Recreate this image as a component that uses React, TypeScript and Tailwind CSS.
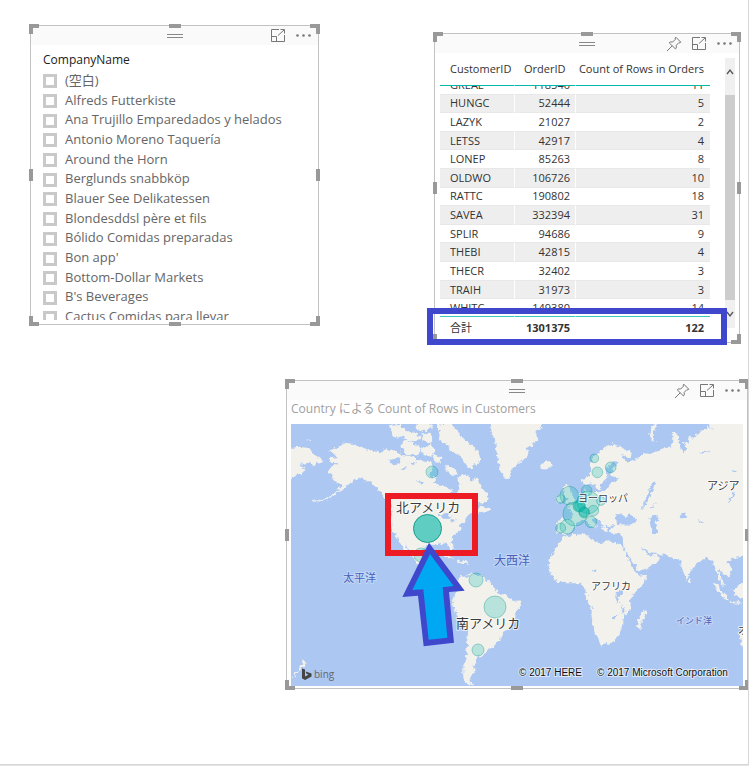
import { useLayoutEffect, useRef, type ReactNode } from "react";

const companies = [
  "(空白)",
  "Alfreds Futterkiste",
  "Ana Trujillo Emparedados y helados",
  "Antonio Moreno Taquería",
  "Around the Horn",
  "Berglunds snabbköp",
  "Blauer See Delikatessen",
  "Blondesddsl père et fils",
  "Bólido Comidas preparadas",
  "Bon app'",
  "Bottom-Dollar Markets",
  "B's Beverages",
  "Cactus Comidas para llevar",
];

const orders: [string, number, number][] = [
  ["GREAL", 118540, 11],
  ["HUNGC", 52444, 5],
  ["LAZYK", 21027, 2],
  ["LETSS", 42917, 4],
  ["LONEP", 85263, 8],
  ["OLDWO", 106726, 10],
  ["RATTC", 190802, 18],
  ["SAVEA", 332394, 31],
  ["SPLIR", 94686, 9],
  ["THEBI", 42815, 4],
  ["THECR", 32402, 3],
  ["TRAIH", 31973, 3],
  ["WHITC", 149380, 14],
];

function PinIcon() {
  return (
    <svg viewBox="0 0 16 16" className="h-4 w-4" fill="none" stroke="#777" strokeWidth="1">
      <path d="M9.8 1.2 14.8 6.2 13.8 6.9 12.9 6.6 10.2 9.4 10.3 11.9 9.4 12.9 3.2 6.8 4.2 5.9 6.7 6 9.5 3.1 9.1 2.1Z M6.2 9.8 1 15" />
    </svg>
  );
}

function FocusIcon() {
  return (
    <svg viewBox="0 0 15 13" className="h-[13px] w-[15px]" fill="none" stroke="#777" strokeWidth="1">
      <path d="M8 .5H.5v12h13V6M.5 7.5h5v5M7 6.500 13 1M9.500 .5h4v4" />
    </svg>
  );
}

function DotsIcon() {
  return (
    <svg viewBox="0 0 15 3" className="h-[3px] w-[15px]" fill="#777">
      <circle cx="1.5" cy="1.5" r="1.3" />
      <circle cx="7.5" cy="1.5" r="1.3" />
      <circle cx="13.5" cy="1.5" r="1.3" />
    </svg>
  );
}

function Handles() {
  return (
    <div aria-hidden="true" className="pointer-events-none absolute -inset-[2px]">
      <i className="absolute top-0 left-0 h-[10px] w-[10px] border-t-4 border-l-4 border-[#999]" />
      <i className="absolute top-0 right-0 h-[10px] w-[10px] border-t-4 border-r-4 border-[#999]" />
      <i className="absolute bottom-0 left-0 h-[10px] w-[10px] border-b-4 border-l-4 border-[#999]" />
      <i className="absolute right-0 bottom-0 h-[10px] w-[10px] border-r-4 border-b-4 border-[#999]" />
      <i className="absolute inset-x-0 top-0 mx-auto h-1 w-3 bg-[#999]" />
      <i className="absolute inset-x-0 bottom-0 mx-auto h-1 w-3 bg-[#999]" />
      <i className="absolute inset-y-0 left-0 my-auto h-3 w-1 bg-[#999]" />
      <i className="absolute inset-y-0 right-0 my-auto h-3 w-1 bg-[#999]" />
    </div>
  );
}

function Visual({ label, pin, className, children }: { label: string; pin?: boolean; className: string; children: ReactNode }) {
  return (
    <section aria-label={label} className={`relative flex flex-col border border-[#c2c2c2] bg-white ${className}`}>
      <header className="grid h-[19px] shrink-0 grid-cols-[1fr_16px_1fr] items-center bg-[#fafafa]">
        <span />
        <span className="h-1 w-4 border-y border-[#888]" />
        <div className="flex items-center justify-end gap-[10px] pr-[7px]">
          {pin && (
            <button aria-label="Pin visual">
              <PinIcon />
            </button>
          )}
          <button aria-label="Focus mode">
            <FocusIcon />
          </button>
          <button aria-label="More options">
            <DotsIcon />
          </button>
        </div>
      </header>
      {children}
      <Handles />
    </section>
  );
}

function Slicer() {
  return (
    <Visual label="CompanyName" className="h-[300px] w-[289px]">
      <div className="flex min-h-0 flex-1 flex-col px-3 pt-[5px] pb-1">
        <h2 className="h-5 text-[12px] leading-5 text-[#222]">CompanyName</h2>
        <div className="min-h-0 flex-1 overflow-hidden">
          <ul className="flex h-[256px] flex-col">
            {companies.map((name) => (
              <li key={name} className="flex flex-1 items-center">
                <label className="flex items-center gap-2 text-[13px] leading-[18px] whitespace-nowrap text-[#666]">
                  <input
                    type="checkbox"
                    className="mt-[3px] h-[14px] w-[14px] appearance-none border-[3px] border-[#c9c9c9] bg-white"
                  />
                  {name}
                </label>
              </li>
            ))}
          </ul>
        </div>
      </div>
    </Visual>
  );
}

function OrdersTable() {
  const scroller = useRef<HTMLDivElement>(null);
  useLayoutEffect(() => {
    if (scroller.current) scroller.current.scrollTop = 10;
  }, []);
  return (
    <Visual label="Orders by customer" pin className="mt-2 h-[310px] w-[306px]">
      <div className="flex min-h-0 flex-1 gap-[15px] pt-[5px] pr-1 pb-1 pl-[5px]">
        <div ref={scroller} className="h-[280px] flex-1 overflow-hidden">
          <table className="h-[292px] w-full table-fixed border-separate border-spacing-0 text-[11px] leading-4 text-[#333]">
            <colgroup>
              <col className="w-[75px]" />
              <col className="w-[61px]" />
              <col />
            </colgroup>
            <thead className="sticky top-0 z-10 bg-white">
              <tr className="h-7">
                <th className="border-r border-b border-r-white border-b-[#01b8aa] pb-1.5 pl-[10px] text-left font-normal">CustomerID</th>
                <th className="border-r border-b border-r-white border-b-[#01b8aa] pb-1.5 pl-[9px] text-left font-normal">OrderID</th>
                <th className="border-b border-[#01b8aa] pr-1.5 pb-1.5 text-right font-normal whitespace-nowrap">Count of Rows in Orders</th>
              </tr>
            </thead>
            <tbody>
              {orders.map(([id, order, count]) => (
                <tr key={id} className="even:bg-[#eee]">
                  <td className="border-r border-b border-r-white border-b-[#e8e8e8] pl-[10px]">{id}</td>
                  <td className="border-r border-b border-r-white border-b-[#e8e8e8] pr-[5px] text-right">{order}</td>
                  <td className="border-b border-[#e8e8e8] pr-1.5 text-right">{count}</td>
                </tr>
              ))}
            </tbody>
            <tfoot className="sticky bottom-0 z-10 bg-white">
              <tr className="h-[22px]">
                <th className="border-t border-r border-t-[#3cc5ba] border-r-white pl-[10px] text-left font-normal">合計</th>
                <td className="border-t border-r border-t-[#3cc5ba] border-r-white pr-[5px] text-right font-bold">1301375</td>
                <td className="border-t border-[#3cc5ba] pr-1.5 text-right font-bold">122</td>
              </tr>
            </tfoot>
          </table>
        </div>
        <div className="flex h-[270px] w-[10px] flex-col bg-[#f0f0f0]">
          <svg viewBox="0 0 10 37" className="h-[37px] w-full" fill="none" stroke="#555" strokeWidth="1.3">
            <path d="M2 16 5 12 8 16" />
          </svg>
          <div className="flex-1 bg-[#cdcdcd]" />
          <svg viewBox="0 0 10 28" className="h-7 w-full" fill="none" stroke="#555" strokeWidth="1.3">
            <path d="M2 12 5 16 8 12" />
          </svg>
        </div>
      </div>
      <div aria-hidden="true" className="absolute -bottom-[3px] -left-2 z-20 h-[37px] w-[300px] border-[6px] border-[#3f48cc]" />
    </Visual>
  );
}

const europeBubbles = [
  [88, 227, 28],
  [62, 237, 13],
  [140, 212, 16],
  [105, 282, 36],
  [145, 247, 34],
  [183, 243, 13],
  [120, 258, 16],
  [133, 278, 16],
  [160, 272, 16],
  [153, 306, 17],
  [82, 320, 22],
  [62, 324, 15],
  [163, 115, 13],
  [172, 157, 16],
  [212, 142, 16],
];

function WorldMap() {
  return (
    <svg
      role="img"
      aria-label="Customers by country"
      viewBox="291 424 452 262"
      preserveAspectRatio="xMidYMid slice"
      className="h-[262px] w-full bg-[#abc7f2]"
    >
      <defs>
        <filter id="coast" x="0" y="0" width="100%" height="100%" colorInterpolationFilters="sRGB">
          <feTurbulence type="fractalNoise" baseFrequency="0.25" numOctaves="2" seed="4" />
          <feDisplacementMap in="SourceGraphic" scale="6" xChannelSelector="R" yChannelSelector="G" />
        </filter>
      </defs>
      <g fill="#f2f1ec" filter="url(#coast)">
        <rect x="281" y="414" width="472" height="282" fill="#abc7f2" />
        <g transform="translate(290 420) scale(.33333)">
          <path d="M-9 84 30 80 55 85 75 105 97 120 92 132 80 125 75 138 55 128 30 135 50 150 20 165-9 184ZM50 58l15 2-8 5Z" />
          <path d="M145 80 165 68 190 72 215 82 245 92 272 98 285 84 300 92 322 90 335 105 360 108 385 120 400 128 410 120 425 130 430 150 415 165 440 175 432 185 445 196 460 198 482 208 490 232 500 240 503 215 508 195 505 172 520 160 535 168 545 185 560 175 570 195 585 215 600 235 590 245 575 250 560 250 555 262 580 258 602 268 590 275 570 280 560 276 545 278 530 290 525 305 510 315 512 330 490 350 485 365 492 385 480 388 470 372 450 370 430 378 415 375 400 385 392 405 400 430 420 432 430 420 442 425 434 440 450 450 452 470 470 482 495 480 490 490 465 490 445 475 430 455 405 448 380 430 365 405 350 382 345 375 355 400 360 415 345 395 333 370 318 350 305 330 303 300 305 270 300 250 285 235 270 215 255 195 235 185 215 175 205 170 190 185 175 195 160 200 140 212 155 195 140 185 125 180 130 165 115 155 118 145 145 130 115 128 120 115 140 112 130 100 118 92Z" />
          <path d="M200 175 165 205 130 228 100 242 70 246 68 243 100 238 130 222 160 200Z" />
          <path d="M300 14 330 12 345 32 372 38 392 50 384 66 350 60 338 46 325 56 308 46ZM335 66 352 62 384 76 396 90 380 106 350 105 335 85ZM376 8h44l10 12-22 14-30-8ZM398 40l24 2 8 18-14 10-20-12ZM394 84l30-14 10 22-12 18-24-6ZM430 100l24 14-8 18-18-8Z" />
          <path d="M436 14 480 10 500 28 512 48 528 58 545 75 565 95 572 120 562 138 548 128 552 146 535 148 528 132 518 124 512 108 495 98 482 92 478 76 460 68 446 60 450 36ZM468 134l22 8 14 20-18 6-16-16Z" />
          <path d="M602-6 602 12 605 40 615 60 620 100 628 140 640 170 655 178 665 150 690 130 720 100 705 85 725 78 745 58 735 36 755 22 760-6Z" />
          <path d="M442 398 470 403 492 418 470 410ZM498 424 520 420 540 430 520 432Z" />
          <g fill="#abc7f2">
            <path d="M298 122l14-8 20 4-4 14-18 4ZM332 148l18-6-8 12ZM445 285l25-6 10 12-18 6ZM478 296l24 4-16 8ZM352 130l26-4-6 12ZM380 180l22 6-8 8Z" />
          </g>
        </g>
        <g transform="translate(410 540) scale(.33333)">
          <path d="M135 125 150 108 165 112 185 100 215 108 235 122 250 140 258 155 275 160 300 175 330 185 334 198 318 215 312 250 300 265 280 275 268 300 250 320 235 330 220 345 205 350 200 365 190 380 195 395 185 405 178 420 192 436 172 432 160 415 160 380 168 350 172 300 175 270 160 250 140 225 128 190 135 165 145 150Z" />
          <path d="M-356 412 -340 395-328 378-325 358-310 372-330 390-345 408Z" />
        </g>
        <g transform="translate(540 420) scale(.33333)">
          <path d="M0 132 8 126 22 120 36 134 22 150 6 146Z" />
          <path d="M122 184 150 165 150 130 165 105 190 85 215 72 240 80 275 98 272 115 242 105 262 125 300 115 310 100 330 102 370 85 395 82 398 40 412 38 420 80 430 100 440 88 428 66 445 68 450 46 462 60 468 42 492 28 520 6 640 6 640 405 580 415 562 425 575 445 565 470 550 460 535 445 542 470 552 490 550 502 538 480 530 455 520 430 500 410 480 425 460 440 440 480 430 455 418 420 400 415 380 405 330 400 310 385 302 375 315 398 325 405 335 408 350 402 360 415 350 430 320 445 295 455 285 435 260 400 250 380 248 355 240 342 212 340 205 332 225 315 200 318 204 335 194 335 185 310 165 290 155 300 172 318 160 326 140 300 125 300 105 315 95 335 75 342 52 335 50 310 62 298 95 298 100 280 82 262 105 245 120 235 138 215 134 200 145 212 180 218 205 205 212 190 236 176 212 168 218 148 234 128 218 126 200 145 202 170 186 190 182 212 168 205 162 190 138 198Z" />
          <path d="M68 202 84 194 90 208 106 240 100 248 74 252 86 236 74 222ZM50 230 66 224 66 244 50 248ZM335 62 328 38 338 14 352 8 340 40 344 64Z" />
          <path d="M70 350 110 344 140 340 146 355 180 370 200 360 240 372 255 395 265 420 285 455 295 468 322 463 315 485 290 515 270 535 272 570 250 592 250 615 235 650 210 670 182 677 175 655 160 630 155 590 155 565 140 535 140 510 120 490 80 490 50 485 30 460 25 440 30 415 50 380Z" />
          <path d="M315 568 318 580 308 602 300 628 291 622 295 595ZM448 474l8 10-4 4-5-6ZM518 488 530 492 548 515 568 542 556 538 535 515ZM566 542 605 548 603 552 570 548ZM578 512 600 492 625 490V535L590 530ZM625 610 608 622 598 640 605 676 630 680Z" />
          <g fill="#abc7f2">
            <path d="M224 290 240 280 256 290 270 282 292 302 276 314 232 312ZM328 294 350 282 358 296 344 306 352 328 356 342 340 342 332 320ZM420 284l16-4 2 12-12 4ZM472 300l22 4-20 4ZM480 96l32-2-24 8ZM500 12l24 20-18-8ZM342 180l6 12-22 48-18 26-4-2 16-36ZM350 244l-14 22-4-2ZM566 246l16-18 2-12-6 10-14 16ZM575 150l16 4-10 6ZM156 450l10-6 4 10-10 4ZM230 515l16-8 4 14-16 12ZM246 556l8 16-4 10-6-14ZM216 592l20-8-2 6-14 8Z" />
            <path d="M228 520 238 546 234 552 226 532Z" />
          </g>
        </g>
      </g>

      <g fill="#01b8aa" fillOpacity=".24" stroke="#0a8f80" strokeOpacity=".35" strokeWidth="1">
        <g transform="translate(540 420)">
          {europeBubbles.map(([x, y, r]) => (
            <circle key={`${x}-${y}`} cx={x / 3} cy={y / 3} r={r / 3} />
          ))}
          <circle cx="39" cy="86" r="6" fillOpacity=".5" />
          <circle cx="44" cy="92" r="5" fillOpacity=".4" />
        </g>
        <circle cx="432" cy="472" r="6" />
        <circle cx="421" cy="555" r="7" />
        <circle cx="476" cy="580" r="7" />
        <circle cx="495" cy="607" r="11" />
        <circle cx="478" cy="650" r="6" />
      </g>

      <g className="font-['Noto_Sans_CJK_JP',sans-serif]" fill="#3a3a3a" stroke="#fff" strokeOpacity=".7" strokeWidth="2" paintOrder="stroke">
        <text x="396" y="512" fontSize="13">北アメリカ</text>
        <text x="456" y="628" fontSize="13">南アメリカ</text>
        <text x="578" y="502" fontSize="10">ヨーロッパ</text>
        <text x="707" y="490" fontSize="11">アジア</text>
        <text x="591" y="590" fontSize="10">アフリカ</text>
        <text x="738" y="634" fontSize="10">オ</text>
        <g fill="#4560bb" strokeOpacity=".3">
          <text x="494" y="565" fontSize="12">大西洋</text>
          <text x="343" y="582" fontSize="11">太平洋</text>
          <text x="676" y="624" fontSize="9">インド洋</text>
        </g>
      </g>

      <circle cx="427.5" cy="528.5" r="14" fill="#5fcdc2" stroke="#1c9c8e" strokeWidth="1" />

      <path d="M302 668.500 305 669.500V676.500L308.500 674.800 306.500 673.800 305.500 671.500 311.500 673.500V676.500L305 680 302 678.200Z" fill="#444" />
      <text x="314" y="678" fontSize="10" fill="#666" className="font-['Open_Sans',sans-serif]">bing</text>
      <g
        className="font-['Liberation_Sans',Arial,sans-serif]"
        fill="#111"
        stroke="#fff"
        strokeOpacity=".6"
        strokeWidth="2"
        paintOrder="stroke"
        fontSize="10"
      >
        <text x="519" y="676">© 2017 HERE</text>
        <text x="597" y="676">© 2017 Microsoft Corporation</text>
      </g>

      <rect x="388" y="496" width="87" height="57" fill="none" stroke="#ed1c24" strokeWidth="6" />
      <g transform="translate(280 530) scale(.33333)">
        <path d="M447 38 554 182 507 186 522 338 431 349 414 197 367 201Z" fill="#3f48cc" />
        <path d="M450 72 521 168 488 172 502 323 446 329 430 178 397 180Z" fill="#00a8f3" />
      </g>
    </svg>
  );
}

export default function App() {
  return (
    <div className="min-h-[766px] bg-[#e4e4e4] font-['Open_Sans','Noto_Sans_CJK_JP',sans-serif]">
      <main className="min-h-[765px] overflow-hidden border-r border-b border-[#d6d6d6] bg-white pt-[25px] pl-[30px]">
        <div className="flex items-start justify-between pr-2">
          <Slicer />
          <OrdersTable />
        </div>
        <Visual label="Customers map" pin className="mt-[37px] ml-64">
          <div className="px-1 pb-[2px]">
            <h2 className="h-6 text-[12px] leading-[18px] text-[#a0a0a0]">Country による Count of Rows in Customers</h2>
            <WorldMap />
          </div>
        </Visual>
      </main>
    </div>
  );
}
